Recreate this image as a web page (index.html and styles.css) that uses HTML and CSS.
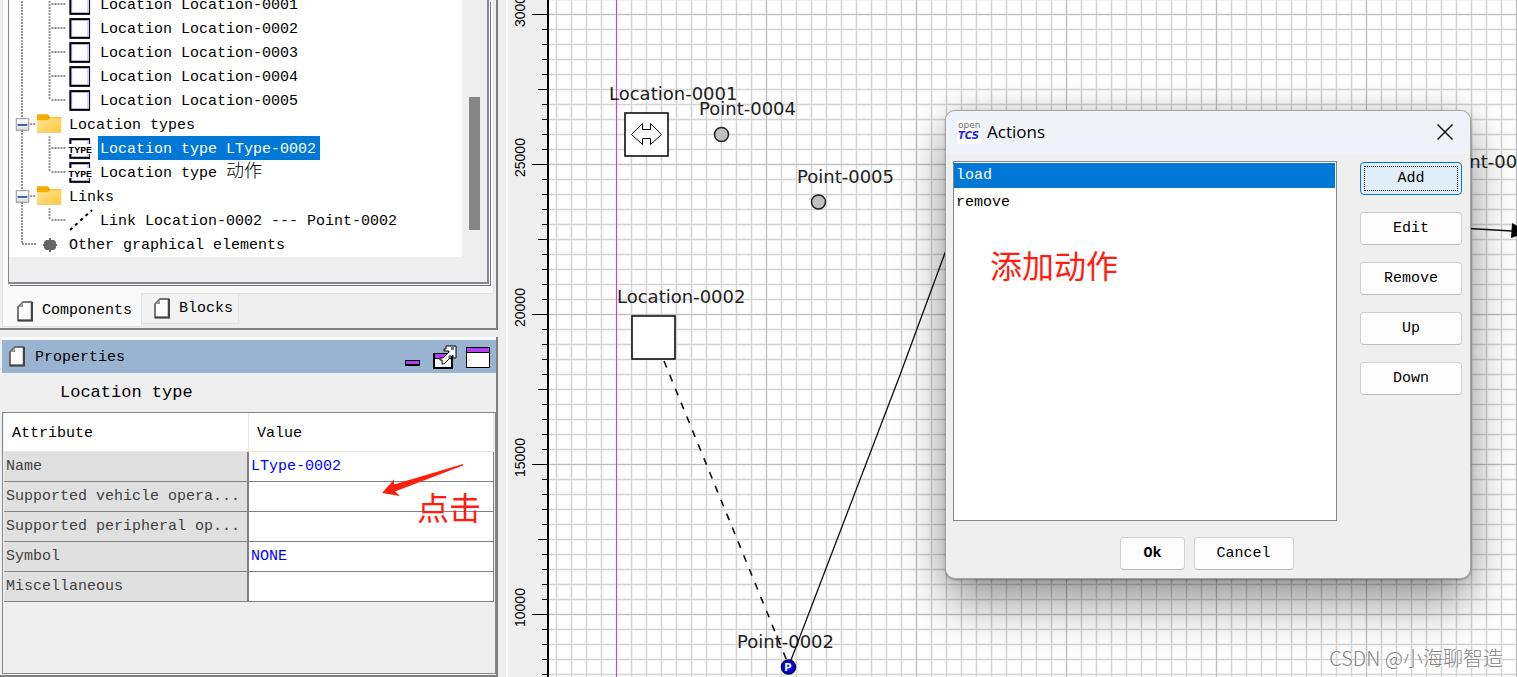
FILE: index.html
```html
<!DOCTYPE html>
<html lang="en">
<head>
<meta charset="utf-8">
<title>openTCS Model Editor</title>
<link rel="stylesheet" href="styles.css">
</head>
<body>
<svg class="defs" aria-hidden="true">
  <defs>
    <linearGradient id="folder-fill" x1="0" y1="0" x2="1" y2="1"><stop offset="0" stop-color="#ffe69a"/><stop offset="1" stop-color="#ffc83a"/></linearGradient>
    <linearGradient id="toggle-fill" x1="0" y1="0" x2="0" y2="1"><stop offset="0" stop-color="#fff"/><stop offset="1" stop-color="#dcdcdc"/></linearGradient>
    <symbol id="branch" viewBox="0 0 90 24"><path class="dots" d="M13 0V24M41 0V24M43 12H57"/></symbol>
    <symbol id="branch-last" viewBox="0 0 90 24"><path class="dots" d="M13 0V24M41 0V12M43 12H57"/></symbol>
    <symbol id="location" viewBox="0 0 90 24"><path fill="#000" d="M61 2h21v21h-21z"/><path fill="#ccccff" d="M63 4h18v17h-18z"/><path fill="#fff" d="M64 5h15v15h-15z"/></symbol>
    <symbol id="loctype" viewBox="0 0 90 24"><path fill="#000" d="M61 2h21v21h-21z"/><path fill="#ccccff" d="M63 4h18v17h-18z"/><path fill="#fff" d="M64 5h15v15h-15zM60 8h24v10h-24z"/><text class="type-label" x="60" y="17">TYPE</text></symbol>
    <symbol id="folder" viewBox="0 0 60 24"><path class="dots" d="M22 12H28"/><path fill="#f5ac00" d="M29 2h11l3 3h11v5H29z"/><path fill="url(#folder-fill)" d="M29 8h10l4-2h11v14H29z"/><path fill="#e9b52f" d="M29 20h25v1H29z"/><path fill="url(#toggle-fill)" stroke="#8e8e8e" d="M7.5 6.500h13v12h-13z"/><path fill="#3f5fb4" d="M9 12h10v2H9z"/></symbol>
    <symbol id="page" viewBox="0 0 16 21"><path fill="#fdfdfd" stroke="#4a4a4a" stroke-width="1.500" d="M1 6L6 1H14.500V19.500H1z"/><path fill="#999" d="M1 6L6 1V6z"/><path fill="#444" d="M14 1h2v19.500h-15v-2h13z"/></symbol>
  </defs>
</svg>
<main class="editor">
  <aside class="sidebar">
    <section class="dock">
      <div class="tab-panel">
        <div class="tree-frame">
          <ul class="tree">
            <li><svg class="lead"><use href="#branch"/><use href="#location"/></svg><span>Location Location-0001</span></li>
            <li><svg class="lead"><use href="#branch"/><use href="#location"/></svg><span>Location Location-0002</span></li>
            <li><svg class="lead"><use href="#branch"/><use href="#location"/></svg><span>Location Location-0003</span></li>
            <li><svg class="lead"><use href="#branch"/><use href="#location"/></svg><span>Location Location-0004</span></li>
            <li><svg class="lead"><use href="#branch-last"/><use href="#location"/></svg><span>Location Location-0005</span></li>
            <li><svg class="lead lead-group"><path class="dots" d="M13 0V24"/><use href="#folder"/></svg><span>Location types</span></li>
            <li><svg class="lead"><use href="#branch"/><use href="#loctype"/></svg><span class="selected">Location type LType-0002</span></li>
            <li><svg class="lead"><use href="#branch-last"/><use href="#loctype"/></svg><span>Location type <b class="han">动作</b></span></li>
            <li><svg class="lead lead-group"><path class="dots" d="M13 0V24"/><use href="#folder"/></svg><span>Links</span></li>
            <li><svg class="lead"><use href="#branch-last"/><path stroke="#ccccff" d="M62 22L83 3"/><path stroke="#000" stroke-width="2" stroke-dasharray="3 4" d="M61 22L83 2"/></svg><span>Link Location-0002 --- Point-0002</span></li>
            <li><svg class="lead lead-group"><path class="dots" d="M13 0V12H28"/><path fill="#666" d="M40 6h2v2h3l2 2v2h1v2h-1v2l-2 2h-3v2h-2v-2h-3l-2-2v-2h-1v-2h1v-2l2-2h3z"/></svg><span>Other graphical elements</span></li>
          </ul>
          <div class="scroll-track"><div class="scroll-thumb"></div></div>
        </div>
      </div>
      <div class="tabs" role="tablist">
        <button class="tab tab-active" role="tab" aria-selected="true"><svg class="page"><use href="#page"/></svg>Components</button>
        <button class="tab" role="tab" aria-selected="false"><svg class="page"><use href="#page"/></svg>Blocks</button>
      </div>
    </section>
    <section class="dock properties">
      <header class="prop-title">
        <svg class="page"><use href="#page"/></svg><h2>Properties</h2>
        <button class="tool" aria-label="Minimize"><svg class="glyph glyph-min" viewBox="0 0 15 6"><path d="M0 0h15v6H0z"/><path fill="#b040f0" d="M1 1h13v3H1z"/></svg></button>
        <button class="tool" aria-label="Detach"><svg class="glyph" viewBox="0 0 24 24"><path d="M0 8h20v16H0z"/><path fill="#b040f0" d="M2 9h16v4H2z"/><path fill="#fff" d="M2 14h16v8H2z"/><path fill="#fff" stroke="#000" d="M13 1h10v12h-3v-3L11 19H9v-4H7v-2h3l6-6v-1h-5v-2h2z"/><path fill="#777" d="M18 2h3v3h-3zM16 10h2v3h-3z"/></svg></button>
        <button class="tool" aria-label="Maximize"><svg class="glyph" viewBox="0 0 24 24"><path d="M0 2h24v21H0z"/><path fill="#b040f0" d="M1 3h22v4H1z"/><path fill="#fff" d="M1 8h22v14H1z"/></svg></button>
      </header>
      <p class="prop-kind">Location type</p>
      <div class="table-frame">
        <table>
          <thead><tr><th>Attribute</th><th>Value</th></tr></thead>
          <tbody>
            <tr><td>Name</td><td>LType-0002</td></tr>
            <tr><td>Supported vehicle opera...</td><td></td></tr>
            <tr><td>Supported peripheral op...</td><td></td></tr>
            <tr><td>Symbol</td><td>NONE</td></tr>
            <tr><td>Miscellaneous</td><td></td></tr>
          </tbody>
        </table>
        <svg class="arrow" viewBox="0 0 82 33"><path fill="#ff1e10" d="M0 29L12 15.500V20.500L81 0V1.500L13 27.500L18 32z"/></svg>
        <span class="note note-click">点击</span>
      </div>
    </section>
  </aside>
  <div class="splitter"></div>
  <svg class="ruler">
    <defs><pattern id="ticks" width="39" height="150" y="14" patternUnits="userSpaceOnUse">
      <path class="tick" d="M22 .5H38M32 15.500H38M32 30.500H38M32 45.500H38M32 60.500H38M28 75.500H38M32 90.500H38M32 105.500H38M32 120.500H38M32 135.500H38"/>
    </pattern></defs>
    <rect width="39" height="100%" fill="url(#ticks)"/>
    <rect x="37" width="2" height="100%"/>
    <text transform="translate(15 27) rotate(-90)">30000</text>
    <text transform="translate(15 177) rotate(-90)">25000</text>
    <text transform="translate(15 327) rotate(-90)">20000</text>
    <text transform="translate(15 477) rotate(-90)">15000</text>
    <text transform="translate(15 627) rotate(-90)">10000</text>
  </svg>
  <section class="canvas">
    <svg class="drawing">
      <defs>
        <pattern id="minor" x="6" y="13" width="15" height="15" patternUnits="userSpaceOnUse"><path fill="#f3f3f3" d="M0 0h15v3H0zM0 0h3v15H0z"/><path fill="#d3d3d3" d="M0 1h15v1H0zM1 0h1v15H1z"/></pattern>
        <pattern id="major" x="67" y="14" width="150" height="150" patternUnits="userSpaceOnUse"><path fill="#bebebe" d="M0 0h150v1H0zM0 0h1v150H0z"/></pattern>
      </defs>
      <rect width="100%" height="100%" fill="url(#minor)"/>
      <rect width="100%" height="100%" fill="url(#major)"/>
      <rect x="67" width="1" height="100%" fill="#d63cd6"/>
      <g class="model" transform="translate(-549 0)">
        <path class="edge link" d="M664 361L787 661"/>
        <path class="edge" d="M791 660L900 375L980 158M1460 228L1512 231"/>
        <path d="M1512 223L1529 232L1511 238z"/>
        <rect class="box" x="625" y="113" width="43" height="43"/>
        <path class="box thin" d="M631.500 134.500L642.500 123.500V129.500H650.500V123.500L661.500 134.500L650.500 144.500V138.500H642.500V144.500z"/>
        <rect class="box" x="632" y="316" width="43" height="43"/>
        <circle class="point" cx="721.500" cy="134.500" r="7"/>
        <circle class="point" cx="818.500" cy="202" r="7"/>
        <circle class="point park" cx="788.500" cy="667" r="7"/>
        <text class="park-label" x="788" y="671">P</text>
        <text x="609" y="100">Location-0001</text>
        <text x="699" y="115">Point-0004</text>
        <text x="797" y="183">Point-0005</text>
        <text x="617" y="303">Location-0002</text>
        <text x="737" y="648">Point-0002</text>
        <text x="1443" y="168">Point-0003</text>
      </g>
    </svg>
    <div class="dialog" role="dialog" aria-labelledby="dialog-title">
      <header class="dialog-title">
        <svg class="app-icon" viewBox="0 0 24 24"><rect width="24" height="24" rx="2" fill="#fff"/><text class="logo-open" x="1" y="8">open</text><text class="logo-tcs" x="1" y="19">TCS</text></svg>
        <h1 id="dialog-title">Actions</h1>
        <button class="close" aria-label="Close"><svg viewBox="0 0 16 16"><path d="M.5 .5L15.500 15.500M15.500 .5L.5 15.500"/></svg></button>
      </header>
      <div class="dialog-body">
        <ul class="actions" role="listbox" aria-label="Actions">
          <li class="current" role="option" aria-selected="true">load</li>
          <li role="option" aria-selected="false">remove</li>
        </ul>
        <div class="commands">
          <button class="btn focused">Add</button>
          <button class="btn">Edit</button>
          <button class="btn">Remove</button>
          <button class="btn">Up</button>
          <button class="btn">Down</button>
        </div>
      </div>
      <footer class="dialog-footer">
        <button class="btn btn-default">Ok</button>
        <button class="btn">Cancel</button>
      </footer>
      <span class="note note-add">添加动作</span>
    </div>
    <span class="watermark">CSDN @小海聊智造</span>
  </section>
</main>
</body>
</html>
```
FILE: styles.css
```css
* { box-sizing: border-box; }
body {
  margin: 0;
  background: #efefef;
  color: #000;
  font: 15px/24px "Liberation Mono", "Noto Sans CJK SC", monospace;
}
ul, h1, h2, p { margin: 0; padding: 0; list-style: none; font-weight: 400; }
button { font: inherit; color: inherit; padding: 0; border: 0; background: none; }
.defs { position: absolute; width: 0; height: 0; }

.editor {
  display: grid;
  grid-template-columns: 498px 12px 39px minmax(0, 1fr);
  height: 100vh;
  overflow: hidden;
}

/* Left docks */
.sidebar {
  display: grid;
  grid-template-rows: minmax(0, 330fr) minmax(0, 340fr);
  gap: 7px;
  min-height: 0;
}
.dock {
  display: flex;
  flex-direction: column;
  min-height: 0;
  border-right: 2px solid #808080;
  border-bottom: 2px solid #808080;
}
.tab-panel {
  display: flex;
  flex: 1;
  min-height: 0;
  margin: 0 2px;
  padding: 0 4px 9px 5px;
  border: solid #e3e3e3;
  border-width: 0 1px;
  background: #f9f9f9;
}
.tree-frame {
  display: flex;
  flex: 1;
  min-width: 0;
  padding-bottom: 25px;
  border: solid #828790;
  border-width: 0 2px 2px 1px;
  background: #efefef;
  box-shadow: 1px 1px #fff, 2px 2px #767676;
}
.tree {
  display: flex;
  flex: 1;
  flex-direction: column;
  justify-content: flex-end;
  padding-bottom: 1px;
  overflow: hidden;
  background: #fff;
}
.tree li { display: flex; flex: none; height: 24px; line-height: 27px; white-space: pre; }
.tree li > span { padding: 0 4px 0 2px; }
.tree .selected { background: #0078d7; color: #fff; }
.han { font-size: 18px; font-weight: 300; line-height: 20px; }
.lead { flex: none; width: 89px; height: 24px; }
.lead-group { width: 58px; }
.lead use { width: 90px; height: 24px; }
.lead-group use { width: 60px; }
.dots { fill: none; stroke: #909090; stroke-width: 2; stroke-dasharray: 2 1; }
.type-label { font: bold 10px "Liberation Mono", monospace; }
.scroll-track { display: flex; align-items: flex-end; width: 25px; padding: 0 7px 27px; }
.scroll-thumb { width: 11px; height: 133px; background: #858585; }

.tabs { display: flex; align-items: flex-start; height: 35px; margin: 0 2px; border-top: 1px solid #e3e3e3; }
.tab { display: flex; align-items: center; gap: 9px; height: 30px; padding: 0 5px 0 12px; border: solid #e3e3e3; border-width: 0 1px 1px 0; background: #f2f2f2; }
.tab-active { height: 34px; margin-top: -1px; padding: 3px 9px 0 14px; border-left-width: 1px; background: #f9f9f9; }
.page { flex: none; width: 16px; height: 21px; }

.properties { padding: 0 0 1px 2px; }
.prop-title { display: flex; align-items: center; height: 36px; padding: 0 6px 0 7px; border-top: 3px solid #f9f9f9; background: #99b4d1; }
.prop-title h2 { flex: 1; padding: 2px 0 0 10px; font-size: 15px; }
.tool { display: flex; margin-left: 9px; }
.tool:first-of-type { margin: 12px 4px 0 0; }
.glyph { width: 24px; height: 24px; }
.glyph-min { width: 15px; height: 6px; }
.prop-kind { padding: 8px 58px 7px; font-size: 17px; }
.table-frame { position: relative; flex: 1; min-height: 0; padding: 0 1px; border: 1px solid #828790; }
table { width: 100%; border-collapse: separate; border-spacing: 0; table-layout: fixed; }
th { height: 39px; padding: 4px 8px 0; border: solid #e6e6e6; border-width: 0 1px 1px 0; background: #fff; font-weight: 400; text-align: left; }
td { height: 30px; padding: 1px 2px 0; border-bottom: 1px solid #808080; background: #fff; color: #00f; white-space: pre; }
td:first-child { border-right: 2px solid #808080; background: #e0e0e0; color: #404040; }
td:last-child { border-right: 1px solid #808080; }
.note { position: absolute; color: #ff1e10; font: 32px/36px "Noto Sans CJK SC", sans-serif; }
.note-click { right: 14px; top: 75px; }
.arrow { position: absolute; right: 31px; top: 51px; width: 82px; height: 33px; }

/* Splitter and ruler */
.splitter { margin: 0 2px 0 8px; border: solid #fff; border-width: 0 1px; }
.ruler { width: 39px; height: 100%; }
.ruler text { font: 14px "Liberation Sans", sans-serif; }
.tick { stroke: #000; }

/* Drawing area */
.canvas { position: relative; overflow: hidden; background: #fff; }
.drawing { display: block; width: 100%; height: 100%; }
.model text { font: 18px "DejaVu Sans", sans-serif; fill: #222; }
.model .park-label { font: bold 10px "DejaVu Sans", sans-serif; fill: #fff; text-anchor: middle; }
.edge { fill: none; stroke: #111; stroke-width: 1.3; }
.link { stroke-width: 1.6; stroke-dasharray: 7 8; }
.box { fill: #fff; stroke: #000; stroke-width: 1.5; }
.thin { stroke-width: 1; }
.point { fill: #c0c0c0; stroke: #222; stroke-width: 1.5; }
.park { fill: #00f; stroke: #000040; }

.dialog {
  position: absolute;
  left: 397px;
  top: 111px;
  width: 524px;
  border-radius: 9px;
  background: #efefef;
  box-shadow: 0 0 0 1px #a6a6a6, 0 1px 2px 1px rgba(0, 0, 0, .3), 0 26px 50px rgba(0, 0, 0, .38), 0 0 30px rgba(0, 0, 0, .15);
}
.dialog-title { display: flex; align-items: center; height: 43px; padding: 0 17px 2px 11px; border-radius: 9px 9px 0 0; background: #eff3f9; }
.dialog-title h1 { flex: 1; padding-left: 6px; font: 17px/24px "Open Sans", sans-serif; }
.app-icon { width: 24px; height: 24px; }
.logo-open { font: 9px "DejaVu Sans", sans-serif; fill: #666; }
.logo-tcs { font: italic bold 10px "DejaVu Sans", sans-serif; fill: #2020f0; }
.close { display: flex; }
.close svg { width: 16px; height: 16px; fill: none; stroke: #111; stroke-width: 1.5; }
.dialog-body { display: flex; gap: 23px; padding: 7px 8px 0 7px; }
.actions { flex: 1; height: 360px; padding: 1px 1px 0 0; border: 1px solid #828790; background: #fff; }
.actions li { height: 26px; padding: 2px 2px 0; }
.actions .current { height: 25px; margin-bottom: 1px; padding-top: 1px; background: #0078d7; color: #fff; }
.commands { display: flex; flex-direction: column; gap: 17px; width: 102px; padding-top: 1px; }
.btn { height: 33px; padding: 0 22px; border: 1px solid #d0d0d0; border-bottom-color: #bbb; border-radius: 4px; background: #fdfdfd; }
.commands .btn { padding: 0; }
.focused { border-color: #0078d7; background: #e0eef9; outline: 1px dotted #000; outline-offset: -5px; }
.btn-default { font-weight: 700; }
.dialog-footer { display: flex; justify-content: center; gap: 9px; padding: 16px 2px 8px 0; }
.note-add { left: 44px; top: 135px; }
.watermark {
  position: absolute;
  right: 14px;
  bottom: 5px;
  color: #858585;
  font: 300 20px/28px "Noto Sans CJK SC", sans-serif;
  text-shadow: 1px 1px #fff;
}
```
